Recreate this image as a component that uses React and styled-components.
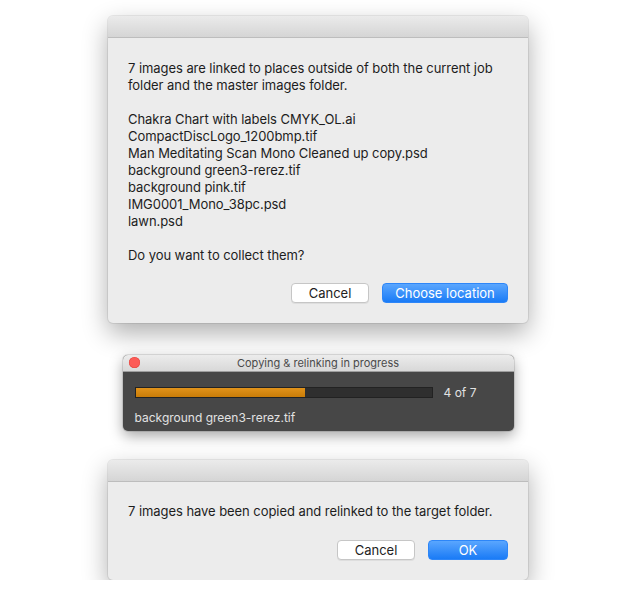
import styled, { createGlobalStyle } from 'styled-components'

const GlobalStyle = createGlobalStyle`
  html, body {
    margin: 0;
    background: #ffffff;
  }
  body {
    font-family: Inter, "Liberation Sans", Arial, sans-serif;
    -webkit-font-smoothing: antialiased;
  }
`

const Page = styled.div`
  width: 636px;
  display: flex;
  flex-direction: column;
  align-items: center;
  padding-top: 16px;
`

const Dialog = styled.div`
  width: 420px;
  background: #ececec;
  border-radius: 5px;
  overflow: hidden;
  box-shadow: 0 0 0 1px rgba(0, 0, 0, 0.07), 0 10px 26px rgba(0, 0, 0, 0.32);
  margin-bottom: ${(p) => p.$gap || 0}px;
`

const TitleBar = styled.div`
  height: 21px;
  background: linear-gradient(#ebebeb, #d5d5d5);
  border-bottom: 1px solid #bdbdbd;
`

const Body = styled.div`
  padding: ${(p) => p.$top}px 20px 20px;
  color: #1d1d1d;
  font-size: 13px;
  line-height: 17px;
  letter-spacing: -0.06px;
`

const Message = styled.p`
  margin: 0;
`

const Blank = styled.div`
  height: 17px;
`

const Buttons = styled.div`
  display: flex;
  justify-content: flex-end;
  gap: 13px;
  margin-top: ${(p) => p.$top}px;
`

const Button = styled.button`
  height: 20px;
  min-width: ${(p) => p.$w}px;
  padding: 0 12px;
  border-radius: 4px;
  font-family: inherit;
  font-size: 13px;
  line-height: 18px;
  cursor: default;
  ${(p) =>
    p.$primary
      ? `
    color: #ffffff;
    border: 1px solid #2d86f8;
    background: linear-gradient(#5aa6fe, #1a7bf6);
  `
      : `
    color: #222222;
    border: 1px solid #c6c6c6;
    background: #ffffff;
    box-shadow: 0 1px 0 rgba(0, 0, 0, 0.06);
  `}
`

const Panel = styled.div`
  width: 391px;
  border-radius: 5px;
  overflow: hidden;
  background: #474747;
  box-shadow: 0 0 0 1px rgba(0, 0, 0, 0.1), 0 5px 14px rgba(0, 0, 0, 0.35);
  margin-bottom: 29px;
`

const PanelTitle = styled.div`
  position: relative;
  height: 16px;
  background: linear-gradient(#ececec, #d8d8d8);
  border-bottom: 1px solid #9e9e9e;
  display: flex;
  align-items: center;
  justify-content: center;
  color: #4a4a4a;
  font-size: 11px;
`

const Close = styled.span`
  position: absolute;
  left: 6px;
  top: 2px;
  width: 11px;
  height: 11px;
  border-radius: 50%;
  background: #fc5b57;
  box-shadow: inset 0 0 0 0.5px #e2463f;
`

const PanelBody = styled.div`
  padding: 15px 12px 0 12px;
  height: 44px;
  color: #e2e2e2;
  font-size: 12px;
`

const ProgressRow = styled.div`
  display: flex;
  align-items: center;
  gap: 11px;
  height: 11px;
`

const Track = styled.div`
  width: 298px;
  height: 11px;
  box-sizing: border-box;
  background: #2f2f2f;
  border: 1px solid #222222;
`

const Fill = styled.div`
  height: 100%;
  background: linear-gradient(#e1931a, #c97c08);
`

const FileName = styled.div`
  margin-top: 13px;
  line-height: 14px;
`

const files = [
  'Chakra Chart with labels CMYK_OL.ai',
  'CompactDiscLogo_1200bmp.tif',
  'Man Meditating Scan Mono Cleaned up copy.psd',
  'background green3-rerez.tif',
  'background pink.tif',
  'IMG0001_Mono_38pc.psd',
  'lawn.psd',
]

export default function App() {
  const done = 4
  const total = 7

  return (
    <>
      <GlobalStyle />
      <Page>
        <Dialog $gap={32}>
          <TitleBar />
          <Body $top={22}>
            <Message>
              7 images are linked to places outside of both the current job
              <br />
              folder and the master images folder.
            </Message>
            <Blank />
            {files.map((f) => (
              <Message key={f}>{f}</Message>
            ))}
            <Blank />
            <Message>Do you want to collect them?</Message>
            <Buttons $top={19}>
              <Button $w={78}>Cancel</Button>
              <Button $w={126} $primary>Choose location</Button>
            </Buttons>
          </Body>
        </Dialog>

        <Panel>
          <PanelTitle>
            <Close />
            Copying &amp; relinking in progress
          </PanelTitle>
          <PanelBody>
            <ProgressRow>
              <Track>
                <Fill style={{ width: `${(done / total) * 100}%` }} />
              </Track>
              <span>{done} of {total}</span>
            </ProgressRow>
            <FileName>background green3-rerez.tif</FileName>
          </PanelBody>
        </Panel>

        <Dialog>
          <TitleBar />
          <Body $top={21}>
            <Message>7 images have been copied and relinked to the target folder.</Message>
            <Buttons $top={20}>
              <Button $w={78}>Cancel</Button>
              <Button $w={80} $primary>OK</Button>
            </Buttons>
          </Body>
        </Dialog>
      </Page>
    </>
  )
}
